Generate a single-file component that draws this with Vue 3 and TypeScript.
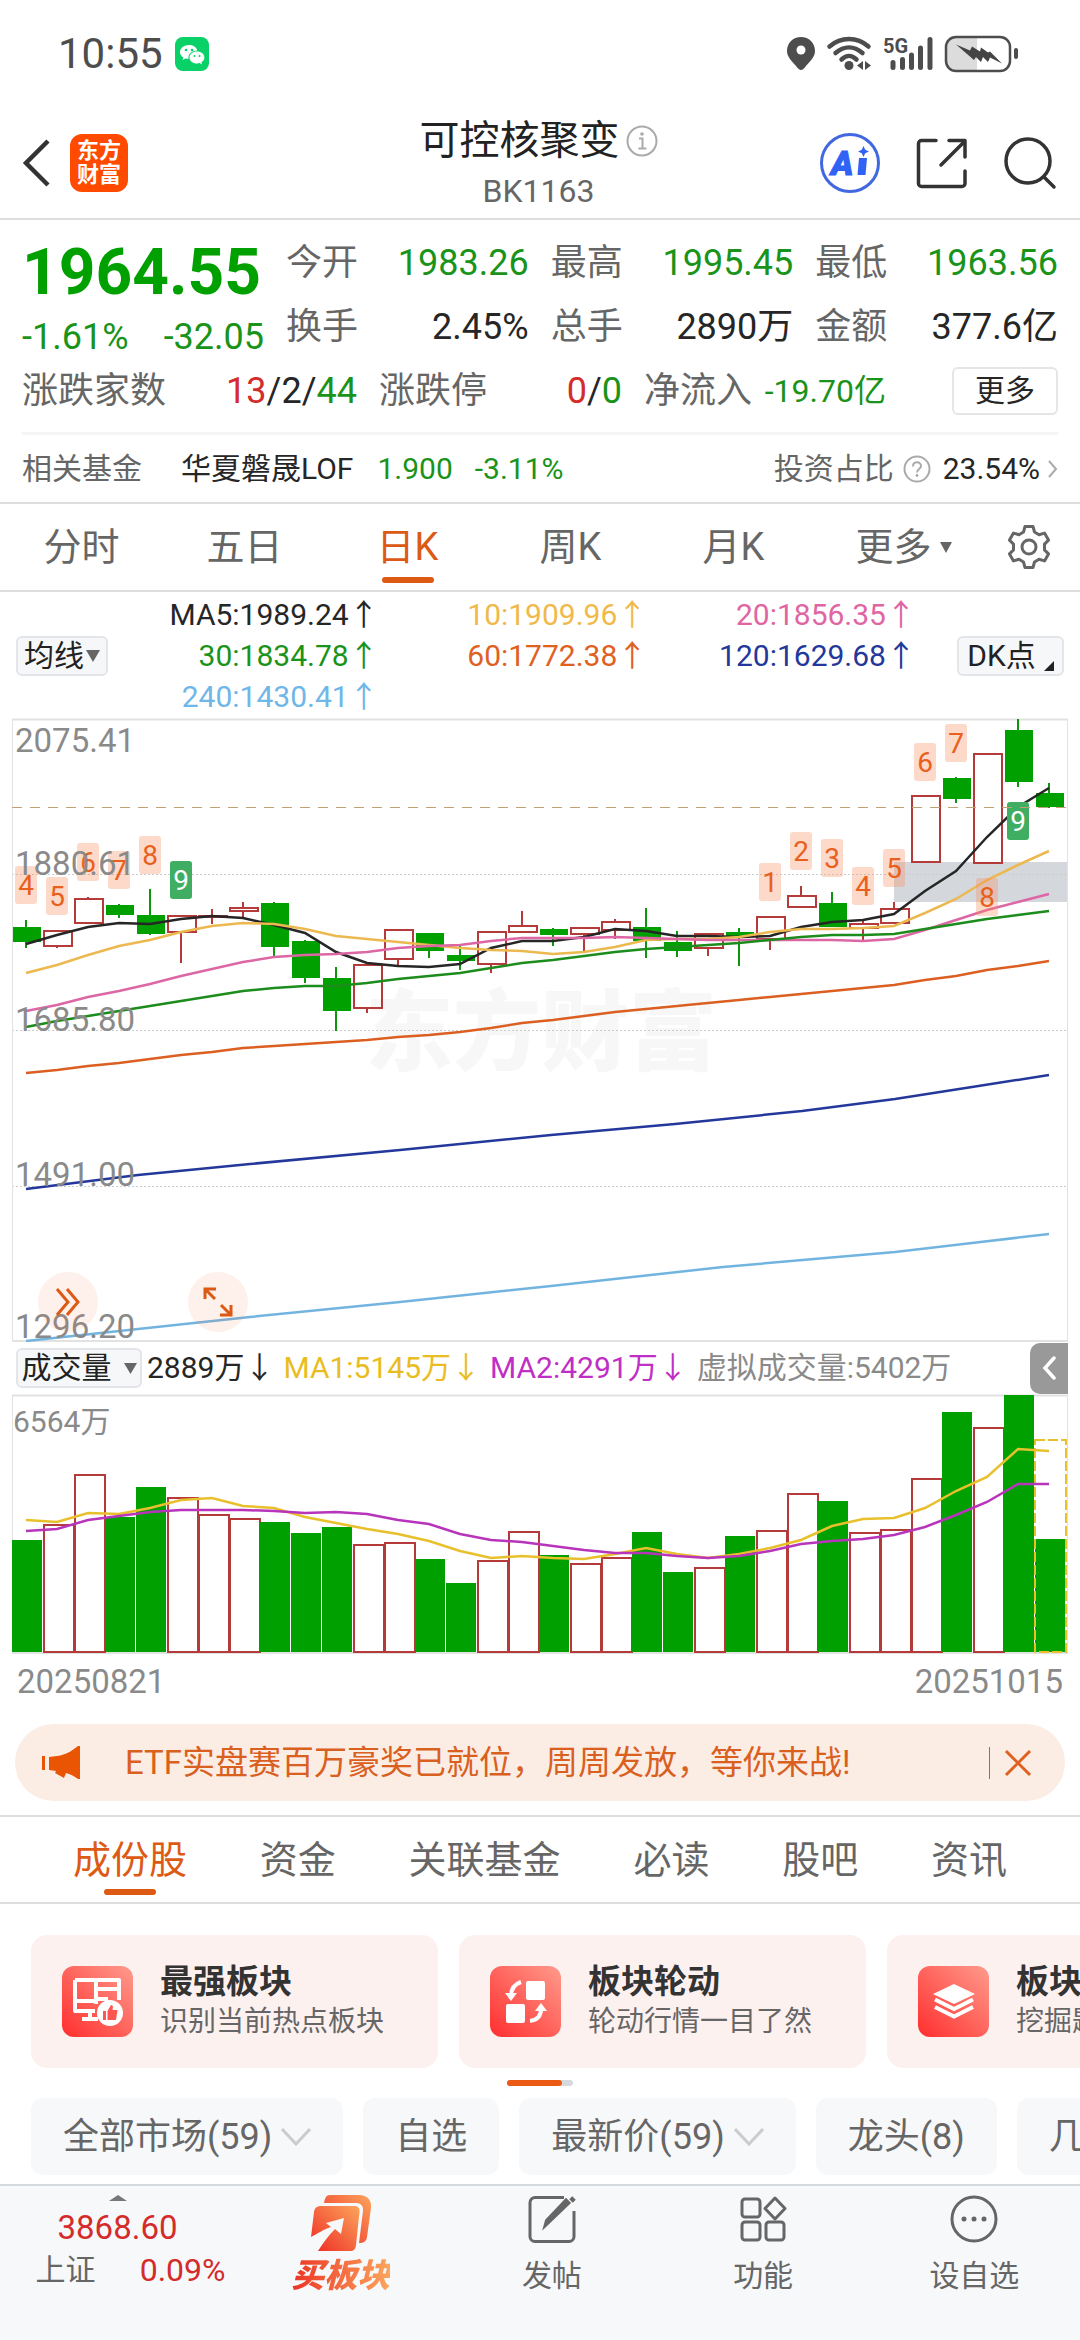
<script setup lang="ts">
import { ref } from 'vue'

type Tone = 'up' | 'down' | 'ink'

interface Stat { label: string; value: string; tone: Tone }
interface Candle { x: number; up: boolean; high: number; top: number; bottom: number; low: number }
interface Tag { x: number; y: number; text: string; strong: boolean }

const stats: Stat[] = [
  { label: '今开', value: '1983.26', tone: 'down' },
  { label: '最高', value: '1995.45', tone: 'down' },
  { label: '最低', value: '1963.56', tone: 'down' },
  { label: '换手', value: '2.45%', tone: 'ink' },
  { label: '总手', value: '2890万', tone: 'ink' },
  { label: '金额', value: '377.6亿', tone: 'ink' },
]

const periods = ['分时', '五日', '日K', '周K', '月K', '更多']
const activePeriod = ref('日K')

const averages = [
  { text: 'MA5:1989.24↑', color: '#262626' },
  { text: '10:1909.96↑', color: '#f0b94a' },
  { text: '20:1856.35↑', color: '#e066a3' },
  { text: '30:1834.78↑', color: '#1a931a' },
  { text: '60:1772.38↑', color: '#e0601f' },
  { text: '120:1629.68↑', color: '#24389c' },
  { text: '240:1430.41↑', color: '#6fb7e8' },
]

/* Chart geometry: 34 sessions, one slot every 31 units. */
const SLOT = 31
const FIRST = 26
const cx = (i: number): number => FIRST + i * SLOT

const py = (v: number): number => Math.round(v / 3 - 18)
const vy = (v: number): number => Math.round(v / 3 - 64)

/* [rising, high, body top, body bottom, low] */
const sessions: [number, number, number, number, number][] = [
  [0, 660, 682, 725, 745], [1, 690, 692, 738, 745], [1, 592, 597, 669, 669], [0, 613, 615, 645, 653],
  [0, 568, 645, 702, 704], [1, 644, 647, 697, 790], [1, 627, 647, 650, 672], [1, 606, 625, 634, 655],
  [0, 606, 610, 741, 770], [0, 720, 722, 833, 848], [0, 800, 834, 933, 993], [1, 793, 795, 924, 938],
  [1, 690, 690, 776, 795], [0, 700, 700, 752, 775], [0, 735, 765, 783, 809], [1, 692, 695, 793, 820],
  [1, 632, 678, 696, 697], [0, 684, 687, 706, 738], [1, 684, 685, 703, 755], [1, 657, 667, 690, 717],
  [0, 624, 682, 724, 773], [0, 693, 727, 752, 770], [1, 700, 702, 745, 768], [0, 684, 697, 710, 798],
  [1, 650, 651, 717, 751], [1, 558, 588, 622, 622], [0, 577, 609, 680, 682], [1, 662, 671, 685, 722],
  [1, 607, 626, 669, 671], [1, 288, 288, 487, 487], [0, 232, 234, 297, 310], [1, 161, 161, 489, 489],
  [0, 57, 90, 245, 260], [0, 249, 279, 322, 325],
]
const candles: Candle[] = sessions.map(([up, h, t, b, l], i) => ({
  x: cx(i), up: up === 1, high: py(h), top: py(t), bottom: py(b), low: py(l),
}))

const path = (values: number[], scale: (v: number) => number): string =>
  values.map((v, i) => `${cx(i)},${scale(v)}`).join(' ')

const priceLines = [
  { color: '#262626', points: path([732, 706, 680, 669, 673, 658, 648, 654, 676, 699, 757, 788, 799, 801, 792, 745, 722, 723, 710, 687, 693, 707, 707, 711, 708, 681, 666, 660, 643, 573, 514, 412, 322, 264], py) },
  { color: '#ecb850', points: path([820, 794, 764, 737, 720, 695, 677, 668, 671, 686, 707, 716, 726, 736, 744, 750, 753, 761, 755, 740, 719, 716, 718, 712, 697, 686, 687, 685, 678, 638, 597, 541, 496, 454], py) },
  { color: '#dd66a5', points: path([933, 914, 892, 873, 852, 829, 807, 786, 771, 766, 763, 757, 745, 738, 734, 722, 715, 715, 715, 712, 714, 717, 721, 721, 720, 719, 720, 723, 716, 690, 661, 631, 605, 582], py) },
  { color: '#1c8c1c', points: path([980, 964, 948, 932, 917, 902, 888, 874, 865, 859, 857, 850, 838, 828, 818, 803, 788, 779, 767, 756, 748, 741, 736, 730, 721, 711, 706, 705, 702, 687, 672, 656, 645, 634], py) },
  { color: '#dc5f22', points: path([1119, 1110, 1098, 1088, 1076, 1066, 1055, 1045, 1038, 1031, 1026, 1020, 1011, 1004, 996, 983, 969, 961, 948, 937, 926, 917, 908, 901, 892, 883, 873, 864, 855, 841, 827, 811, 797, 784], py) },
  { color: '#24389c', points: '26,471 138,457 250,446 400,432 551,417 675,406 802,393 895,381 972,369 1049,357' },
  { color: '#72b4e0', points: '26,623 138,611 250,599 400,584 551,568 723,549 895,534 972,525 1049,516' },
]

const tags: Tag[] = ([
  [0, 499, '4'], [1, 532, '5'], [2, 430, '6'], [3, 454, '7'], [4, 408, '8'], [5, 484, '9'],
  [24, 490, '1'], [25, 396, '2'], [26, 417, '3'], [27, 501, '4'], [28, 446, '5'],
  [29, 128, '6'], [30, 73, '7'], [31, 534, '8'], [32, 306, '9'],
] as [number, number, string][]).map(([i, y, text]) => ({ x: cx(i), y: py(y), text, strong: text === '9' }))

const axis = [
  { y: 34, text: '2075.41' },
  { y: 157, text: '1880.61' },
  { y: 313, text: '1685.80' },
  { y: 468, text: '1491.00' },
  { y: 620, text: '1296.20' },
]

const volumeTops = [629, 584, 435, 560, 471, 503, 555, 566, 576, 609, 591, 644, 639, 686, 758, 692, 605, 676, 702, 684, 606, 727, 713, 617, 603, 492, 513, 610, 599, 447, 246, 295, 196, 628]
const bars = volumeTops.map((v, i) => ({ x: 12 + i * SLOT, y: vy(v), h: 258 - vy(v), up: sessions[i][0] === 1 }))

const volumeLines = [
  { color: '#e8c02c', points: path([571, 576, 549, 552, 535, 511, 505, 529, 534, 561, 579, 597, 611, 632, 662, 684, 677, 683, 686, 673, 654, 673, 685, 671, 654, 630, 588, 567, 564, 533, 484, 440, 356, 362], vy) },
  { color: '#b834bb', points: path([603, 596, 571, 559, 547, 541, 540, 540, 544, 549, 545, 551, 571, 583, 612, 631, 636, 649, 660, 668, 670, 678, 685, 678, 663, 643, 633, 626, 616, 592, 556, 515, 462, 462], vy) },
]

const sections = ['成份股', '资金', '关联基金', '必读', '股吧', '资讯']
const activeSection = ref('成份股')

const cards = [
  { icon: 'board', title: '最强板块', note: '识别当前热点板块' },
  { icon: 'rotate', title: '板块轮动', note: '轮动行情一目了然' },
  { icon: 'layers', title: '板块挖掘', note: '挖掘题材投资机会' },
]

const filters = [
  { text: '全部市场(59)', menu: true },
  { text: '自选', menu: false },
  { text: '最新价(59)', menu: true },
  { text: '龙头(8)', menu: false },
  { text: '几日涨幅', menu: false },
]

const bannerOpen = ref(true)
</script>

<template>
  <div class="app">
    <div class="status">
      <span class="clock">10:55</span>
      <svg class="wechat" viewBox="0 0 34 34" aria-hidden="true">
        <rect width="34" height="34" rx="8" fill="#08d167" />
        <path d="M14 8c-5 0-9 3-9 7 0 2.300 1.300 4.200 3.300 5.500L7.500 23l3-1.500c1 .3 2 .5 3 .5-.8-5 3.500-8.500 8.800-8.500C21.500 10 18 8 14 8z" fill="#fff" />
        <path d="M22 14.500c-4.200 0-7.500 2.600-7.500 6s3.300 6 7.500 6c.9 0 1.800-.1 2.600-.4l2.400 1.300-.6-2.200c1.900-1.100 3-2.800 3-4.700 0-3.400-3.200-6-7.400-6z" fill="#fff" />
        <g fill="#08d167"><circle cx="11" cy="13" r="1.300" /><circle cx="17" cy="13" r="1.300" /><circle cx="19.500" cy="19" r="1" /><circle cx="24.500" cy="19" r="1" /></g>
      </svg>
      <svg class="signals" viewBox="0 0 232 40" aria-label="5G">
        <path d="M14 3C6 3 0 9 0 17c0 6 5 10 9 15 2 2.500 3.500 4 5 4s3-1.500 5-4c4-5 9-9 9-15C28 9 22 3 14 3z" fill="#4d4d4d" />
        <circle cx="14" cy="16" r="4.500" fill="#fff" />
        <g fill="none" stroke="#4d4d4d" stroke-width="4.500" stroke-linecap="round">
          <path d="M42.500 12.500C54 2.500 70 2.500 81.500 12.500" />
          <path d="M48.500 19C57 11.500 67 11.500 75.500 19" />
          <path d="M54.500 25.500C60 20.500 64 20.500 69.500 25.500" />
        </g>
        <circle cx="62" cy="31.500" r="4.500" fill="#4d4d4d" />
        <path d="M76 27v9l-6-4.500zM78 27v9l6-4.500z" fill="#4d4d4d" />
        <text x="96" y="19" font-size="20" font-weight="700" fill="#4d4d4d">5G</text>
        <g stroke="#4d4d4d" stroke-width="5" stroke-linecap="round">
          <path d="M106 28.500v5M115.500 25.500v8M124.500 21v12.500M133.500 14v19.500M143 5.500v28" />
        </g>
        <path d="M168 3h22v33h-22a9 9 0 0 1-9-9V12a9 9 0 0 1 9-9z" fill="#dcdcdc" />
        <rect x="159" y="3" width="64" height="34" rx="10" fill="none" stroke="#4d4d4d" stroke-width="2.500" />
        <path d="M169 10.500l14 6 2-4 8 5 1-4 7 5 2-1 12 12-12-6-2 4.500-5-5-2 5-5-5-2 3z" fill="#444" />
        <rect x="227" y="14" width="4" height="11" rx="2" fill="#4d4d4d" />
      </svg>
    </div>

    <header class="header">
      <div class="side">
        <button class="bare" aria-label="返回">
          <svg width="30" height="50" viewBox="0 0 30 50"><path d="M28 3L6 25l22 22" fill="none" stroke="#333" stroke-width="4.500" /></svg>
        </button>
        <a class="logo" href="#"><span>东方</span><span>财富</span></a>
      </div>
      <div class="title">
        <h1>可控核聚变
          <svg width="32" height="32" viewBox="0 0 32 32"><circle cx="16" cy="16" r="14.500" fill="none" stroke="#aaa" stroke-width="2" /><path d="M13 13.500h3.500V23M12.500 23.500h8" fill="none" stroke="#aaa" stroke-width="2" /><circle cx="16" cy="9" r="1.800" fill="#aaa" /></svg>
        </h1>
        <p>BK1163</p>
      </div>
      <div class="side tools">
        <button class="bare" aria-label="Ai">
          <svg width="62" height="62" viewBox="0 0 62 62">
            <circle cx="31" cy="31" r="28.500" fill="none" stroke="#4168e0" stroke-width="3" />
            <text x="12" y="43" font-size="34" font-weight="900" font-style="italic" fill="#2f62f5" stroke="#2f62f5" stroke-width="1">A</text>
            <path d="M40 26h8l-1.500 17h-8z" fill="#2f62f5" />
            <path d="M44.500 14l1.700 3.800 3.800 1.700-3.800 1.700-1.700 3.800-1.700-3.800-3.800-1.700 3.800-1.700z" fill="#2f62f5" />
          </svg>
        </button>
        <button class="bare" aria-label="分享">
          <svg width="52" height="52" viewBox="0 0 52 52" fill="none" stroke="#333" stroke-width="3.500" stroke-linecap="round" stroke-linejoin="round">
            <path d="M20 3.500H5.500a3 3 0 0 0-3 3v40a3 3 0 0 0 3 3H46a3 3 0 0 0 3-3V34M33 3.500h16V20M48 5L25 28" />
          </svg>
        </button>
        <button class="bare" aria-label="搜索">
          <svg width="54" height="54" viewBox="0 0 54 54" fill="none" stroke="#333" stroke-width="3.500" stroke-linecap="round">
            <circle cx="25" cy="25" r="22" /><path d="M41 41l10 10" />
          </svg>
        </button>
      </div>
    </header>

    <section class="quote">
      <div class="quote-main">
        <div class="price">
          <strong>1964.55</strong>
          <div class="change"><span>-1.61%</span><span>-32.05</span></div>
        </div>
        <dl class="stats">
          <div v-for="s in stats" :key="s.label" class="stat">
            <dt>{{ s.label }}</dt><dd :class="s.tone">{{ s.value }}</dd>
          </div>
        </dl>
      </div>
      <div class="breadth">
        <div class="stat"><span>涨跌家数</span><span class="ink"><b class="up">13</b>/2/<b class="down">44</b></span></div>
        <div class="stat"><span>涨跌停</span><span class="ink"><b class="up">0</b>/<b class="down">0</b></span></div>
        <div class="stat"><span>净流入</span><span class="down flow">-19.70亿</span></div>
        <button class="more">更多</button>
      </div>
      <div class="fund">
        <span>相关基金</span>
        <a class="ink fund-name" href="#">华夏磐晟LOF</a>
        <span class="down">1.900</span>
        <span class="down fund-rate">-3.11%</span>
        <span class="share">投资占比</span>
        <svg width="28" height="28" viewBox="0 0 28 28"><circle cx="14" cy="14" r="12.500" fill="none" stroke="#aaa" stroke-width="2" /><path d="M10 11.500c0-5.500 8-5.500 8-.5 0 3-4 3-4 6.500" fill="none" stroke="#aaa" stroke-width="2" /><circle cx="14" cy="20.500" r="1.400" fill="#aaa" /></svg>
        <span class="ink ratio">23.54%</span>
        <svg width="10" height="20" viewBox="0 0 10 20"><path d="M1 2l7 8-7 8" fill="none" stroke="#aaa" stroke-width="2" /></svg>
      </div>
    </section>

    <nav class="periods">
      <button v-for="p in periods" :key="p" :class="{ on: p === activePeriod }" @click="activePeriod = p">
        {{ p }}<svg v-if="p === '更多'" class="caret" width="12" height="12" viewBox="0 0 12 12"><path d="M0 1h12L6 12z" fill="#666" /></svg>
      </button>
      <button class="gear" aria-label="设置">
        <svg width="44" height="46" viewBox="0 0 44 46" fill="none" stroke="#666" stroke-width="3" stroke-linejoin="round">
          <path d="M18 2.500h8l1.500 5.500 4.500 2.700 5.500-1.600 4 7-4 4v5.800l4 4-4 7-5.500-1.600-4.500 2.700-1.500 5.500h-8L16.500 38 12 35.300l-5.500 1.600-4-7 4-4v-5.800l-4-4 4-7L12 10.700 16.500 8z" />
          <circle cx="22" cy="23" r="7" />
        </svg>
      </button>
    </nav>

    <div class="legend">
      <button class="pill ma">均线<svg width="14" height="12" viewBox="0 0 14 12"><path d="M0 0h14L7 12z" fill="#666" /></svg></button>
      <div class="averages">
        <span v-for="a in averages" :key="a.text" :style="{ color: a.color }">{{ a.text }}</span>
      </div>
      <button class="pill dk">DK点<svg width="10" height="10" viewBox="0 0 10 10"><path d="M10 0v10H0z" fill="#222" /></svg></button>
    </div>

    <div class="kline">
      <svg class="plot" viewBox="0 0 1080 624" role="img" aria-label="日K">
        <text class="mark" x="541" y="345" text-anchor="middle">东方财富</text>
        <rect x="894" y="144" width="173" height="40" fill="#d4d7dc" />
        <g stroke="#ccc" stroke-dasharray="2 2">
          <path d="M12 156.500H1067M12 312.500H1067M12 468.500H1067" />
        </g>
        <path d="M12 1.500H1068M12 623H1068" stroke="#e2e2e2" stroke-width="2" />
        <path d="M12.500 1V623M1067.500 1V623" stroke="#e2e2e2" />
        <g v-for="c in candles" :key="c.x">
          <template v-if="c.up">
            <path :d="`M${c.x} ${c.high}V${c.top}M${c.x} ${c.bottom}V${c.low}`" stroke="#b53a3a" stroke-width="2" />
            <rect :x="c.x - 13" :y="c.top" width="28" :height="Math.max(c.bottom - c.top, 1)" fill="none" stroke="#b53a3a" stroke-width="2" />
          </template>
          <template v-else>
            <path :d="`M${c.x} ${c.high}V${c.low}`" stroke="#0b960b" stroke-width="2" />
            <rect :x="c.x - 13" :y="c.top" width="28" :height="c.bottom - c.top" fill="#00a000" />
          </template>
        </g>
        <polyline v-for="l in priceLines" :key="l.color" :points="l.points" fill="none" :stroke="l.color" stroke-width="2.500" />
        <g v-for="t in tags" :key="t.x" class="tag" :class="{ strong: t.strong }">
          <rect :x="t.x - 11" :y="t.y" width="22" height="38" rx="3" />
          <text :x="t.x" :y="t.y + 29" text-anchor="middle">{{ t.text }}</text>
        </g>
        <path d="M12 89.500H1067" stroke="#bfa274" stroke-dasharray="10 8" />
        <text v-for="a in axis" :key="a.text" class="axis" x="15" :y="a.y">{{ a.text }}</text>
      </svg>
      <button class="float next" aria-label="下一项">
        <svg width="26" height="30" viewBox="0 0 26 30" fill="none" stroke="#dc5a14" stroke-width="3"><path d="M2 2l11 13L2 28M12 2l11 13-11 13" /></svg>
      </button>
      <button class="float expand" aria-label="全屏">
        <svg width="30" height="30" viewBox="0 0 30 30" fill="none" stroke="#dc5a14" stroke-width="3"><path d="M2 12V2h11M2 2l10 10M28 18v10H17M28 28L18 18" /></svg>
      </button>
    </div>

    <div class="volume-head">
      <button class="pill vol">成交量<svg width="13" height="12" viewBox="0 0 13 12"><path d="M0 1h13L6.500 12z" fill="#666" /></svg></button>
      <span class="v-now">2889万↓</span>
      <span class="v-ma1">MA1:5145万↓</span>
      <span class="v-ma2">MA2:4291万↓</span>
      <span class="v-est">虚拟成交量:5402万</span>
      <button class="drawer" aria-label="展开">
        <svg width="14" height="26" viewBox="0 0 14 26"><path d="M12 3L3 13l9 10" fill="none" stroke="#fff" stroke-width="3.500" stroke-linecap="round" /></svg>
      </button>
    </div>

    <svg class="plot" viewBox="0 0 1080 262" role="img" aria-label="成交量">
      <path d="M12 1.500H1068M12 259H1068" stroke="#e2e2e2" stroke-width="2" />
      <path d="M12.500 1V259M1067.500 1V259" stroke="#e2e2e2" />
      <template v-for="b in bars" :key="b.x">
        <rect v-if="b.up" :x="b.x + 1" :y="b.y" width="30" :height="b.h" fill="none" stroke="#b53a3a" stroke-width="2" />
        <rect v-else :x="b.x" :y="b.y" width="30" :height="b.h" fill="#00a000" />
      </template>
      <rect x="1035" y="46" width="31" height="212" fill="none" stroke="#e8c02c" stroke-width="2" stroke-dasharray="10 3" />
      <polyline v-for="l in volumeLines" :key="l.color" :points="l.points" fill="none" :stroke="l.color" stroke-width="2.500" />
      <text class="peak" x="13" y="38">6564万</text>
    </svg>
    <div class="dates"><span>20250821</span><span>20251015</span></div>

    <div v-if="bannerOpen" class="banner">
      <svg width="40" height="36" viewBox="0 0 40 36"><path d="M1 11h3v14H1zM8 12l8-1c9-1 16-6 21-10h2v33h-2c-4-3-8-5-12-6l-2 5-9-5 1-2-7-1z" fill="#ea5504" /></svg>
      <a href="#">ETF实盘赛百万豪奖已就位，周周发放，等你来战!</a>
      <button class="bare close" aria-label="关闭" @click="bannerOpen = false">
        <svg width="28" height="28" viewBox="0 0 28 28"><path d="M2 2l24 24M26 2L2 26" stroke="#e0601f" stroke-width="3" /></svg>
      </button>
    </div>

    <nav class="sections">
      <button v-for="s in sections" :key="s" :class="{ on: s === activeSection }" @click="activeSection = s">{{ s }}</button>
    </nav>

    <div class="cards">
      <a v-for="c in cards" :key="c.title" class="card" href="#">
        <span class="card-icon">
          <svg v-if="c.icon === 'board'" width="52" height="50" viewBox="0 0 52 50">
            <path d="M3 3h44v20M3 3v31h20M3 24h20M24 3v24M24 12h22M24 22h12M18 34v8h8M10 42h12" fill="none" stroke="#fff" stroke-width="4" stroke-linejoin="round" />
            <circle cx="38" cy="36" r="13" fill="#fff" />
            <path d="M31 34h3v9h-3zM35.500 34l3.500-6c2.500 0 2 3 1.500 5h5l-1.500 10h-8.500z" fill="#fe5550" />
          </svg>
          <svg v-else-if="c.icon === 'rotate'" width="44" height="44" viewBox="0 0 44 44">
            <rect x="22" y="1" width="19" height="19" rx="2" fill="#fff" /><rect x="2" y="24" width="19" height="19" rx="2" fill="#fff" />
            <path d="M17 2C11 4 7 8 7 16" fill="none" stroke="#fff" stroke-width="4" /><path d="M1 13h12l-6 8z" fill="#fff" />
            <path d="M26 41c7-1 11-5 11-12" fill="none" stroke="#fff" stroke-width="4" /><path d="M31 31h12l-6-8z" fill="#fff" />
          </svg>
          <svg v-else width="44" height="36" viewBox="0 0 44 36">
            <path d="M22 0l21 10-21 10L1 10z" fill="#fff" />
            <path d="M3 15.500l19 9.500 19-9.500M3 23l19 9.500L41 23" fill="none" stroke="#fff" stroke-width="4" />
          </svg>
        </span>
        <span class="card-text"><b>{{ c.title }}</b><span>{{ c.note }}</span></span>
      </a>
    </div>
    <div class="pager"><i></i></div>

    <div class="filters">
      <button v-for="f in filters" :key="f.text">
        {{ f.text }}<svg v-if="f.menu" width="30" height="18" viewBox="0 0 30 18"><path d="M1 1l14 15L29 1" fill="none" stroke="#ccc" stroke-width="3" /></svg>
      </button>
    </div>

    <footer class="dock">
      <button class="index">
        <svg width="18" height="6" viewBox="0 0 18 6"><path d="M9 0l9 6H0z" fill="#777" /></svg>
        <span class="index-value">3868.60</span>
        <span class="index-row"><span>上证</span><span class="up">0.09%</span></span>
      </button>
      <button class="buy">
        <svg width="62" height="56" viewBox="0 0 62 56">
          <defs>
            <linearGradient id="buyFill" x1="0" y1="1" x2="1" y2="0"><stop offset="0" stop-color="#ee2a24" /><stop offset="1" stop-color="#fca55c" /></linearGradient>
          </defs>
          <path d="M20 0h29c8 0 13 5 12 13l-4 29c-.5 4-3 6-8 6l4-32c.6-5-2-8-7-8H14c1-5 2-8 6-8z" fill="url(#buyFill)" />
          <path d="M11 11h33c4 0 6 2 5.500 6L46 50c-.5 4-2 6-6 6H8c5-8 10-15 17-22l6 5 3-16-18 5 5 4C14 34 7 39 1 42L4 17c.5-4 3-6 7-6z" fill="url(#buyFill)" />
        </svg>
        <span>买板块</span>
      </button>
      <button>
        <svg width="48" height="48" viewBox="0 0 48 48" fill="none" stroke="#666" stroke-width="3">
          <path d="M36 2.500H7a5 5 0 0 0-5 5v34a5 5 0 0 0 5 5h34a5 5 0 0 0 5-5V16" /><path d="M41 8L17 31l1.500-5.500L38 5z" fill="#666" /><path d="M43 6l3-3" stroke-width="5" />
        </svg>
        <span>发帖</span>
      </button>
      <button>
        <svg width="48" height="48" viewBox="0 0 48 48" fill="none" stroke="#666" stroke-width="3">
          <rect x="3" y="4" width="18" height="18" rx="3" /><rect x="3" y="27" width="18" height="18" rx="3" /><rect x="27" y="27" width="18" height="18" rx="3" />
          <path d="M36 3l10 10.500L36 24 26 13.500z" stroke-linejoin="round" />
        </svg>
        <span>功能</span>
      </button>
      <button>
        <svg width="48" height="48" viewBox="0 0 48 48"><circle cx="24" cy="24" r="22" fill="none" stroke="#666" stroke-width="3" /><g fill="#666"><circle cx="14" cy="24" r="2.500" /><circle cx="24" cy="24" r="2.500" /><circle cx="34" cy="24" r="2.500" /></g></svg>
        <span>设自选</span>
      </button>
    </footer>
  </div>
</template>

<style>
body { background: #fff; }
</style>

<style scoped>
.app {
  display: flex;
  flex-direction: column;
  min-height: 100vh;
  overflow: hidden;
  color: #666;
  background: #fff;
  font-family: Roboto, "Noto Sans CJK SC", sans-serif;
  line-height: 1;
}
* { box-sizing: border-box; }
svg { flex: none; }
button { margin: 0; padding: 0; border: 0; background: none; color: inherit; font: inherit; }
a { color: inherit; text-decoration: none; }
h1, p, dl, dd { margin: 0; font-weight: 400; }
b { font-weight: 400; }
.up { color: #d42b2b; }
.down { color: #1a931a; }
.ink { color: #262626; }
.bare { display: flex; }

.status { display: flex; align-items: center; height: 107px; padding: 0 61px 0 58px; }
.clock { font-size: 42px; color: #4d4d4d; }
.wechat { width: 34px; height: 34px; margin-left: 12px; }
.signals { width: 232px; height: 40px; margin-left: auto; }

.header {
  display: grid;
  grid-template-columns: 1fr auto 1fr;
  align-items: center;
  height: 113px;
  padding: 0 23px 0 20px;
  border-bottom: 2px solid #ddd;
}
.side { display: flex; align-items: center; gap: 20px; }
.tools { justify-content: flex-end; gap: 35px; }
.logo {
  display: flex;
  flex-direction: column;
  align-items: center;
  justify-content: center;
  width: 58px;
  height: 58px;
  border-radius: 12px;
  background: #ff4a00;
  color: #fff;
  font-size: 22px;
  font-weight: 700;
  line-height: 24px;
}
.title { padding-top: 4px; text-align: center; }
.title h1 { display: flex; align-items: center; gap: 6px; font-size: 40px; line-height: 52px; color: #222; }
.title p { font-size: 32px; line-height: 48px; }

.quote { padding: 11px 22px 0; border-bottom: 2px solid #ddd; }
.quote-main { display: flex; gap: 22px; }
.price { flex: 0 0 242px; min-width: 0; }
.price strong { display: block; font-size: 64px; line-height: 84px; color: #00a000; }
.change { display: flex; justify-content: space-between; font-size: 36px; line-height: 44px; color: #1a931a; }
.stats { display: grid; flex: 1; grid-template-columns: repeat(3, 1fr); column-gap: 22px; }
.stat { display: flex; align-items: center; justify-content: space-between; height: 64px; font-size: 36px; white-space: nowrap; }
.breadth { display: grid; grid-template-columns: 335fr 243fr 242fr 150fr; align-items: center; column-gap: 22px; }
.flow { font-size: 32px; }
.more { justify-self: end; width: 106px; height: 48px; border: 2px solid #e5e5e5; border-radius: 6px; color: #262626; font-size: 30px; }
.fund { display: flex; align-items: center; height: 70px; margin-top: 9px; border-top: 3px solid #f5f5f5; font-size: 30px; }
.fund-name { margin: 0 24px 0 39px; }
.fund-rate { margin-left: 22px; }
.share { margin-left: auto; margin-right: 9px; }
.ratio { margin: 0 8px 0 12px; }

.periods { display: flex; height: 88px; border-bottom: 2px solid #ddd; }
.periods button { position: relative; display: flex; flex: 1; align-items: center; justify-content: center; gap: 8px; font-size: 38px; }
.periods .caret { margin-right: -14px; }
.periods .gear { flex: 0 0 102px; }
.on { color: #dc5a14; }
.periods .on::after, .sections .on::after {
  position: absolute;
  bottom: 7px;
  left: 50%;
  width: 52px;
  height: 6px;
  margin-left: -26px;
  border-radius: 3px;
  background: #dc5a14;
  content: "";
}

.legend { display: flex; align-items: center; padding: 2px 16px 1px; font-size: 30px; }
.pill {
  display: flex;
  align-items: center;
  justify-content: center;
  height: 40px;
  border: 2px solid #e3e5e8;
  border-radius: 6px;
  background: #f6f7f9;
  color: #222;
  font-size: 30px;
  line-height: 36px;
}
.ma { gap: 2px; width: 92px; }
.dk { align-items: flex-end; gap: 8px; width: 107px; }
.dk svg { margin-bottom: 3px; }
.averages { display: grid; flex: 1; grid-template-columns: repeat(3, 1fr); margin: 0 41px 0 2px; line-height: 41px; text-align: right; white-space: nowrap; }

.kline { position: relative; }
.plot { display: block; width: 100%; height: auto; }
.mark { font-size: 88px; font-weight: 900; fill: #f7f7f7; }
.axis { font-size: 33px; fill: #8a8a8a; }
.peak { font-size: 30px; fill: #8a8a8a; }
.tag rect { fill: rgba(250, 140, 90, 0.33); }
.tag text { font-size: 28px; fill: #e8601c; }
.tag.strong rect { fill: #3fae62; }
.tag.strong text { fill: #fff; }
.float { position: absolute; bottom: 10px; display: flex; align-items: center; justify-content: center; width: 60px; height: 60px; border-radius: 50%; background: rgba(250, 120, 60, 0.11); }
.next { left: 38px; }
.expand { left: 188px; }

.volume-head { display: flex; align-items: center; gap: 9px; height: 52px; padding: 0 12px 0 16px; font-size: 30px; white-space: nowrap; }
.vol { gap: 12px; width: 126px; }
.v-now { color: #262626; margin-left: -4px; }
.v-ma1 { color: #e9bd22; }
.v-ma2 { color: #bf2fc6; }
.v-est { color: #8a8a8a; }
.drawer { display: flex; align-items: center; justify-content: center; width: 38px; height: 51px; margin-left: auto; border-radius: 10px 0 0 10px; background: #999; }
.dates { display: flex; justify-content: space-between; padding: 0 17px; font-size: 33px; line-height: 52px; color: #8a8a8a; }

.banner { display: flex; align-items: center; height: 77px; margin: 16px 15px 14px; padding: 0 33px 0 26px; border-radius: 39px; background: #fcede4; color: #d9601f; font-size: 33px; white-space: nowrap; }
.banner a { margin-left: 44px; }
.close { margin-left: auto; padding: 2px 0 2px 14px; border-left: 1px solid #dc5a14; }

.sections { display: flex; justify-content: space-between; height: 89px; padding: 0 73px; border-top: 2px solid #ddd; border-bottom: 2px solid #ddd; }
.sections button { position: relative; font-size: 38px; }

.cards { display: flex; gap: 21px; padding: 31px 0 0 31px; }
.card { display: flex; flex: 0 0 407px; align-items: center; gap: 27px; height: 133px; padding-left: 31px; border-radius: 16px; background: #fdf1f0; white-space: nowrap; }
.card-icon { display: flex; align-items: center; justify-content: center; width: 71px; height: 71px; border-radius: 12px; background: linear-gradient(45deg, #ff2e2e, #ff9b8c); }
.card-text { display: flex; flex-direction: column; font-size: 28px; line-height: 40px; }
.card-text b { color: #333; font-size: 33px; font-weight: 700; }
.pager { width: 66px; height: 6px; margin: 12px auto; border-radius: 3px; background: #d5d8dc; }
.pager i { display: block; width: 55px; height: 6px; border-radius: 3px; background: #ea5a14; }

.filters { display: flex; gap: 20px; padding: 0 0 9px 31px; }
.filters button { display: flex; flex: none; align-items: center; gap: 9px; height: 77px; padding: 0 32px; border-radius: 12px; background: #f7f8fa; font-size: 36px; white-space: nowrap; }

.dock { display: flex; flex: 1; min-height: 156px; padding-top: 9px; border-top: 2px solid #d5dade; background: #f7f8fa; font-size: 30px; }
.dock button { display: flex; flex: 1; flex-direction: column; align-items: center; justify-content: flex-start; gap: 12px; line-height: 42px; }
.dock .index { flex: 0 0 235px; gap: 0; }
.index-value { margin-top: 6px; color: #d42b2b; font-size: 33px; }
.index-row { display: flex; justify-content: space-between; width: 216px; padding-left: 26px; }
.index-row .up { font-size: 32px; }
.dock .buy { gap: 4px; }
.buy span { font-size: 33px; font-style: italic; font-weight: 900; background: linear-gradient(90deg, #ec3324, #fca55c); background-clip: text; color: transparent; }
</style>
